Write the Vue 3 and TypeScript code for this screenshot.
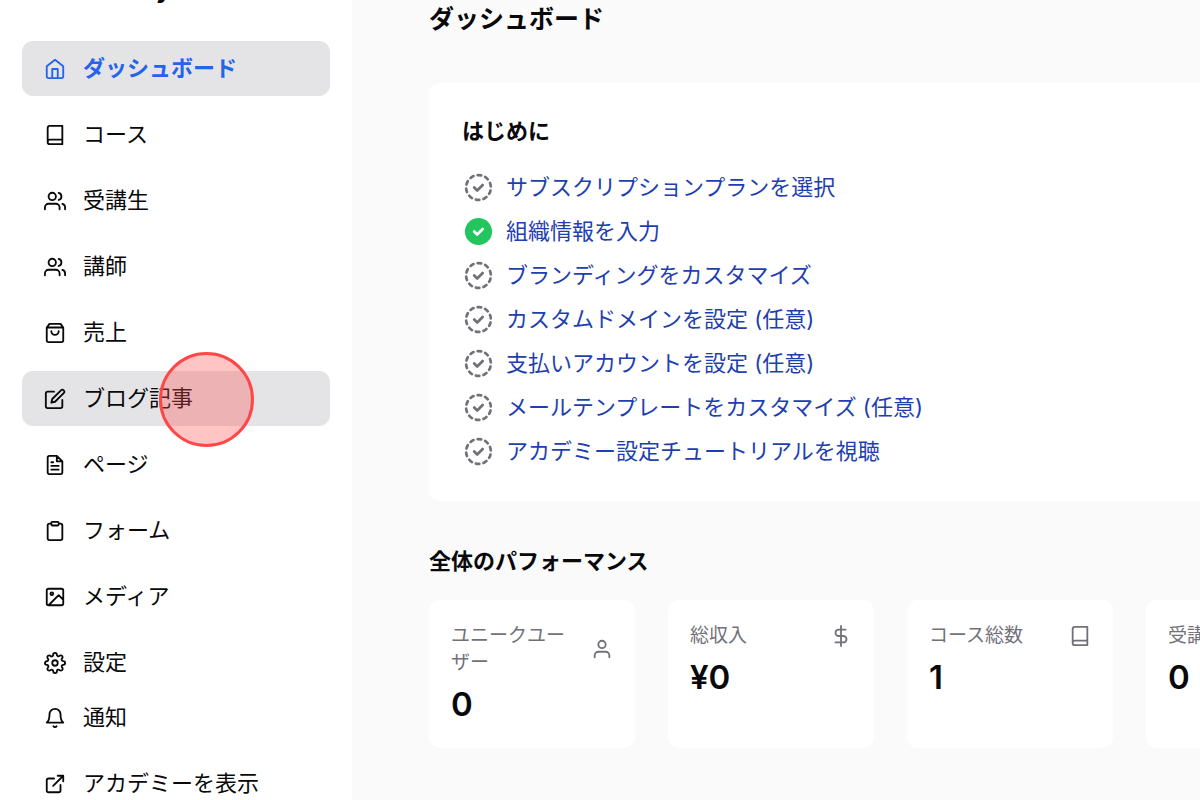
<script setup lang="ts">
interface NavItem {
  label: string
  icon: string
  active?: boolean
  hovered?: boolean
}

interface Task {
  label: string
  done: boolean
}

interface Stat {
  label: string
  value: string
  icon: string
}

// Stroke icons on a 24-unit grid
const icons: Record<string, string> = {
  home: 'M3 9l9-7 9 7v11a2 2 0 0 1-2 2H5a2 2 0 0 1-2-2zM9 22V12h6v10',
  book: 'M4 19.5A2.5 2.5 0 0 1 6.5 17H20M6.5 2H20v20H6.5A2.5 2.5 0 0 1 4 19.5v-15A2.5 2.5 0 0 1 6.5 2z',
  users:
    'M17 21v-2a4 4 0 0 0-4-4H5a4 4 0 0 0-4 4v2M13 7a4 4 0 1 1-8 0a4 4 0 0 1 8 0zM23 21v-2a4 4 0 0 0-3-3.87M16 3.13a4 4 0 0 1 0 7.75',
  bag: 'M6 2L3 6v14a2 2 0 0 0 2 2h14a2 2 0 0 0 2-2V6l-3-4zM3 6h18M16 10a4 4 0 0 1-8 0',
  edit: 'M11 4H4a2 2 0 0 0-2 2v14a2 2 0 0 0 2 2h14a2 2 0 0 0 2-2v-7M18.5 2.5a2.121 2.121 0 0 1 3 3L12 15l-4 1 1-4 9.5-9.5z',
  file: 'M14 2H6a2 2 0 0 0-2 2v16a2 2 0 0 0 2 2h12a2 2 0 0 0 2-2V8zM14 2v6h6M16 13H8M16 17H8M10 9H8',
  clipboard:
    'M16 4h2a2 2 0 0 1 2 2v14a2 2 0 0 1-2 2H6a2 2 0 0 1-2-2V6a2 2 0 0 1 2-2h2M9 2h6a1 1 0 0 1 1 1v2a1 1 0 0 1-1 1H9a1 1 0 0 1-1-1V3a1 1 0 0 1 1-1z',
  image:
    'M5 3h14a2 2 0 0 1 2 2v14a2 2 0 0 1-2 2H5a2 2 0 0 1-2-2V5a2 2 0 0 1 2-2zM10 8.5a1.5 1.5 0 1 1-3 0a1.5 1.5 0 0 1 3 0zM21 15l-5-5L5 21',
  settings:
    'M15 12a3 3 0 1 1-6 0a3 3 0 0 1 6 0zM19.4 15a1.65 1.65 0 0 0 .33 1.82l.06.06a2 2 0 0 1 0 2.83 2 2 0 0 1-2.83 0l-.06-.06a1.65 1.65 0 0 0-1.82-.33 1.65 1.65 0 0 0-1 1.51V21a2 2 0 0 1-2 2 2 2 0 0 1-2-2v-.09A1.65 1.65 0 0 0 9 19.4a1.65 1.65 0 0 0-1.82.33l-.06.06a2 2 0 0 1-2.83 0 2 2 0 0 1 0-2.83l.06-.06a1.65 1.65 0 0 0 .33-1.82 1.65 1.65 0 0 0-1.51-1H3a2 2 0 0 1-2-2 2 2 0 0 1 2-2h.09A1.65 1.65 0 0 0 4.6 9a1.65 1.65 0 0 0-.33-1.82l-.06-.06a2 2 0 0 1 0-2.83 2 2 0 0 1 2.83 0l.06.06a1.65 1.65 0 0 0 1.82.33H9a1.65 1.65 0 0 0 1-1.51V3a2 2 0 0 1 2-2 2 2 0 0 1 2 2v.09a1.65 1.65 0 0 0 1 1.51 1.65 1.65 0 0 0 1.82-.33l.06-.06a2 2 0 0 1 2.83 0 2 2 0 0 1 0 2.83l-.06.06a1.65 1.65 0 0 0-.33 1.82V9a1.65 1.65 0 0 0 1.51 1H21a2 2 0 0 1 2 2 2 2 0 0 1-2 2h-.09a1.65 1.65 0 0 0-1.51 1z',
  bell: 'M18 8A6 6 0 0 0 6 8c0 7-3 9-3 9h18s-3-2-3-9M13.73 21a2 2 0 0 1-3.46 0',
  external: 'M18 13v6a2 2 0 0 1-2 2H5a2 2 0 0 1-2-2V8a2 2 0 0 1 2-2h6M15 3h6v6M10 14L21 3',
  user: 'M20 21v-2a4 4 0 0 0-4-4H8a4 4 0 0 0-4 4v2M16 7a4 4 0 1 1-8 0a4 4 0 0 1 8 0z',
  dollar: 'M12 1v22M17 5H9.5a3.5 3.5 0 0 0 0 7h5a3.5 3.5 0 0 1 0 7H6',
}

const navGroups: NavItem[][] = [
  [
    { label: 'ダッシュボード', icon: 'home', active: true },
    { label: 'コース', icon: 'book' },
    { label: '受講生', icon: 'users' },
    { label: '講師', icon: 'users' },
    { label: '売上', icon: 'bag' },
    { label: 'ブログ記事', icon: 'edit', hovered: true },
    { label: 'ページ', icon: 'file' },
    { label: 'フォーム', icon: 'clipboard' },
    { label: 'メディア', icon: 'image' },
    { label: '設定', icon: 'settings' },
  ],
  [
    { label: '通知', icon: 'bell' },
    { label: 'アカデミーを表示', icon: 'external' },
  ],
]

const tasks: Task[] = [
  { label: 'サブスクリプションプランを選択', done: false },
  { label: '組織情報を入力', done: true },
  { label: 'ブランディングをカスタマイズ', done: false },
  { label: 'カスタムドメインを設定 (任意)', done: false },
  { label: '支払いアカウントを設定 (任意)', done: false },
  { label: 'メールテンプレートをカスタマイズ (任意)', done: false },
  { label: 'アカデミー設定チュートリアルを視聴', done: false },
]

const stats: Stat[] = [
  { label: 'ユニークユーザー', value: '0', icon: 'user' },
  { label: '総収入', value: '¥0', icon: 'dollar' },
  { label: 'コース総数', value: '1', icon: 'book' },
  { label: '受講生総数', value: '0', icon: 'users' },
]
</script>

<template>
  <div class="layout">
    <aside class="sidebar">
      <div class="brand">y</div>
      <nav>
        <ul v-for="(group, g) in navGroups" :key="g" class="nav-group">
          <li v-for="item in group" :key="item.label">
            <a href="#" class="nav-link" :class="{ active: item.active, hovered: item.hovered }">
              <svg class="icon" viewBox="0 0 24 24" aria-hidden="true"><path :d="icons[item.icon]" /></svg>
              <span>{{ item.label }}</span>
              <i v-if="item.hovered" class="pointer"></i>
            </a>
          </li>
        </ul>
      </nav>
    </aside>

    <main class="content">
      <h1>ダッシュボード</h1>

      <section class="panel">
        <h2>はじめに</h2>
        <ul class="tasks">
          <li v-for="task in tasks" :key="task.label">
            <svg class="check" :class="{ done: task.done }" viewBox="0 0 33 33" aria-hidden="true">
              <circle v-if="task.done" class="disc" cx="16.5" cy="16.5" r="13.6" />
              <circle v-else class="ring" cx="16.5" cy="16.5" r="12.4" pathLength="100" transform="rotate(-94 16.5 16.5)" />
              <path class="tick" d="M12.2 16.5l3 3 5.5-5.5" />
            </svg>
            <a href="#">{{ task.label }}</a>
          </li>
        </ul>
      </section>

      <section class="performance">
        <h2>全体のパフォーマンス</h2>
        <div class="stats">
          <article v-for="stat in stats" :key="stat.label" class="stat">
            <div class="stat-head">
              <span>{{ stat.label }}</span>
              <svg class="icon" viewBox="0 0 24 24" aria-hidden="true"><path :d="icons[stat.icon]" /></svg>
            </div>
            <strong>{{ stat.value }}</strong>
          </article>
        </div>
      </section>
    </main>
  </div>
</template>

<style>
body {
  margin: 0;
  background: #fafafa;
}
</style>

<style scoped>
.layout {
  display: flex;
  height: 100vh;
  overflow: hidden;
  background: #fafafa;
  color: #09090b;
  font-family: Inter, 'Noto Sans CJK JP', sans-serif;
  font-size: 22px;
  line-height: 33px;
}

h1,
h2,
ul {
  margin: 0;
  padding: 0;
}

ul {
  list-style: none;
}

a {
  text-decoration: none;
}

.icon {
  flex: none;
  width: 22px;
  height: 22px;
  fill: none;
  stroke: currentColor;
  stroke-width: 2;
  stroke-linecap: round;
  stroke-linejoin: round;
}

.sidebar {
  box-sizing: border-box;
  flex: 0 0 352px;
  padding: 0 22px;
  background: #fff;
}

.brand {
  margin: -27px 0 35px;
  padding-left: 134px;
  font-size: 25px;
  font-weight: 700;
}

.nav-group {
  display: flex;
  flex-direction: column;
  gap: 11px;
}

.nav-link {
  position: relative;
  display: flex;
  align-items: center;
  gap: 17px;
  height: 55px;
  padding: 0 22px;
  border-radius: 11px;
  color: #09090b;
}

.nav-link.active,
.nav-link.hovered {
  background: #e4e4e7;
}

.nav-link.active {
  color: #2563eb;
  font-weight: 600;
}

.pointer {
  position: absolute;
  top: -19px;
  left: 137px;
  box-sizing: border-box;
  width: 95px;
  height: 95px;
  border: 3px solid #ff4747;
  border-radius: 50%;
  background: rgba(255, 76, 76, 0.33);
}

.content {
  flex: 1;
  min-width: 0;
  padding-left: 77px;
}

h1 {
  margin-bottom: 44px;
  font-size: 25px;
  font-weight: 600;
  line-height: 39px;
}

h2 {
  font-size: 22px;
  font-weight: 600;
}

.panel {
  padding: 33px;
  border-radius: 11px 0 0 11px;
  background: #fff;
}

.panel h2 {
  margin-bottom: 24px;
  line-height: 31px;
}

.tasks {
  display: flex;
  flex-direction: column;
  gap: 11px;
}

.tasks li {
  display: flex;
  align-items: center;
  gap: 11px;
}

.tasks a {
  color: #1e40af;
}

.check {
  width: 33px;
  height: 33px;
  fill: none;
  stroke: #71717a;
  stroke-width: 2.7;
  stroke-linecap: round;
  stroke-linejoin: round;
}

.ring {
  stroke-dasharray: 4.6 5.4;
}

.disc {
  fill: #22c55e;
  stroke: none;
}

.done .tick {
  stroke: #fff;
}

.performance {
  margin-top: 44px;
}

.performance h2 {
  margin-bottom: 22px;
}

.stats {
  display: grid;
  grid-auto-columns: 206px;
  grid-auto-flow: column;
  gap: 33px;
}

.stat {
  padding: 22px;
  border-radius: 11px;
  background: #fff;
}

.stat-head {
  display: flex;
  align-items: center;
  justify-content: space-between;
  gap: 11px;
  color: #71717a;
  font-size: 19px;
  line-height: 27px;
}

.stat strong {
  display: block;
  margin-top: 6px;
  font-size: 33px;
  font-weight: 600;
  line-height: 44px;
}
</style>
